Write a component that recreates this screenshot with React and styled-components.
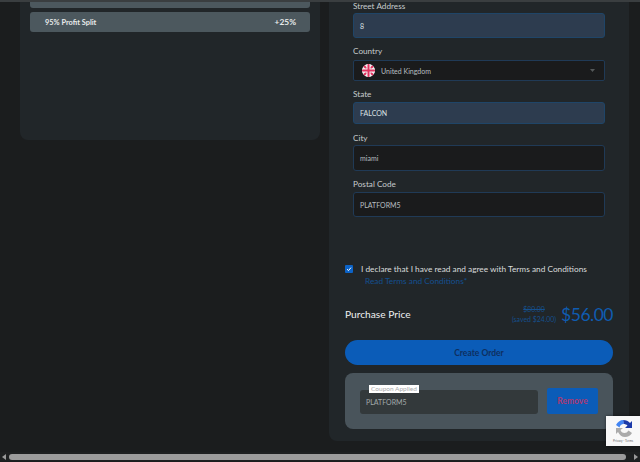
import React from "react";
import styled, { createGlobalStyle } from "styled-components";

const Global = createGlobalStyle`
  html, body {
    margin: 0;
    padding: 0;
    height: 462px;
    overflow: hidden;
    background: #1b1d1e;
  }
  * {
    box-sizing: border-box;
  }
`;

const Page = styled.div`
  width: 640px;
  height: 462px;
  display: flex;
  flex-direction: column;
  font-family: "Lato", "Open Sans", sans-serif;
  background: #1b1d1e;
  position: relative;
`;

const TopEdge = styled.div`
  height: 2px;
  flex: none;
  background: #3a3e40;
`;

const Main = styled.div`
  flex: 1;
  min-height: 0;
  display: flex;
  align-items: flex-start;
  padding-left: 20px;
  gap: 9px;
`;

const PlanCard = styled.section`
  width: 300px;
  height: 138px;
  padding: 0 10px;
  background: #212629;
  border-radius: 0 0 8px 8px;
  display: flex;
  flex-direction: column;
  gap: 4px;
`;

const PlanRow = styled.div`
  height: ${(p) => p.$height}px;
  padding: 0 14px 0 15px;
  background: #4c585e;
  border-radius: ${(p) => (p.$cut ? "0 0 3px 3px" : "3px")};
  display: flex;
  align-items: center;
  justify-content: space-between;
  color: #e9ecec;
  font-size: 7.4px;
  font-weight: 700;
`;

const PlanValue = styled.span`
  font-size: 8.4px;
  font-weight: 700;
`;

const OrderCard = styled.section`
  width: 300px;
  height: 439px;
  padding: 0 16px;
  background: #212629;
  border-radius: 0 0 8px 8px;
`;

const Fields = styled.div`
  padding: 0 8px;
  height: 252px;
`;

const Field = styled.div`
  margin-bottom: ${(p) => p.$gap}px;
`;

const Label = styled.label`
  display: block;
  height: ${(p) => p.$height}px;
  line-height: 9px;
  font-size: 8.2px;
  color: #c6cbcc;
`;

const Input = styled.div`
  width: 252px;
  height: ${(p) => p.$height}px;
  padding: 0 6px;
  display: flex;
  align-items: center;
  font-size: 7px;
  border-radius: 3px;
  color: ${(p) => (p.$filled ? "#dbe0e4" : "#b9bfc0")};
  background: ${(p) => (p.$filled ? "#2d3c4f" : "#1a1b1c")};
  border: 1px solid ${(p) => (p.$filled ? "#1f4568" : "#203a56")};
`;

const SelectBox = styled(Input)`
  justify-content: space-between;
  padding: 0 9px 0 8px;
  border-radius: 2px;
`;

const SelectValue = styled.span`
  display: flex;
  align-items: center;
  gap: 6px;
`;

const Flag = styled.svg`
  width: 13px;
  height: 13px;
  display: block;
`;

const Caret = styled.span`
  width: 5px;
  height: 3px;
  background: #55595a;
  clip-path: polygon(0 0, 100% 0, 50% 100%);
`;

const Agree = styled.div`
  margin-top: 9px;
  display: flex;
  gap: 8px;
`;

const Check = styled.span`
  flex: none;
  width: 8px;
  height: 8px;
  margin-top: 2px;
  background: #0c63c7;
  border-radius: 1px;
  display: flex;
  align-items: center;
  justify-content: center;
`;

const AgreeText = styled.div`
  font-size: 8.3px;
  line-height: 12px;
  color: #d9dcdc;
  white-space: nowrap;
`;

const TermsLink = styled.a`
  display: block;
  padding-left: 4px;
  color: #144f8f;
`;

const PriceRow = styled.div`
  margin-top: 12px;
  height: 30px;
  display: flex;
  align-items: center;
  justify-content: space-between;
`;

const PriceLabel = styled.span`
  font-size: 10.2px;
  color: #eef0f0;
`;

const PriceGroup = styled.div`
  display: flex;
  align-items: center;
  gap: 5px;
`;

const Saved = styled.div`
  font-size: 6.9px;
  line-height: 10px;
  text-align: center;
  color: #154f8c;
`;

const OldPrice = styled.div`
  text-decoration: line-through;
`;

const Price = styled.span`
  font-size: 17.5px;
  letter-spacing: -0.5px;
  color: #0f5cb0;
`;

const OrderButton = styled.button`
  display: block;
  width: 268px;
  height: 25px;
  margin-top: 11px;
  padding: 0;
  border: 0;
  border-radius: 13px;
  background: #0b5cb8;
  color: #0e2f60;
  font-family: inherit;
  font-size: 8.5px;
  font-weight: 700;
`;

const CouponBox = styled.div`
  width: 268px;
  height: 56px;
  margin-top: 8px;
  padding: 15px 15px 0;
  background: #49545b;
  border-radius: 8px;
  display: flex;
  align-items: flex-start;
  gap: 9px;
`;

const CouponField = styled.div`
  position: relative;
  width: 178px;
  height: 24px;
  margin-top: 2px;
  padding: 0 6px;
  display: flex;
  align-items: center;
  background: #33393b;
  border-radius: 3px;
  color: #a3a9aa;
  font-size: 7px;
`;

const CouponLabel = styled.span`
  position: absolute;
  left: 9px;
  top: -5px;
  width: 50px;
  height: 8px;
  line-height: 8px;
  background: #fff;
  color: #a9abad;
  font-size: 6.5px;
  text-align: center;
`;

const RemoveButton = styled.button`
  width: 51px;
  height: 26px;
  padding: 0;
  border: 0;
  border-radius: 2px;
  background: #0b5cb8;
  color: #ab3a72;
  font-family: inherit;
  font-size: 8.5px;
  font-weight: 700;
`;

const Captcha = styled.div`
  position: absolute;
  right: 0;
  top: 416px;
  width: 34px;
  height: 30px;
  padding-top: 2px;
  background: #f8f8f8;
  display: flex;
  flex-direction: column;
  align-items: center;
  box-shadow: 0 0 3px rgba(0, 0, 0, 0.5);
`;

const CaptchaLogo = styled.svg`
  width: 21px;
  height: 21px;
  display: block;
`;

const CaptchaText = styled.span`
  font-size: 3px;
  line-height: 4px;
  color: #666;
  white-space: nowrap;
`;

const ScrollTrack = styled.div`
  flex: none;
  height: 9px;
  margin-bottom: 1px;
  display: flex;
  align-items: center;
  gap: 2px;
  padding: 0 2px;
  background: #1e2021;
`;

const ScrollArrow = styled.span`
  flex: none;
  width: 0;
  height: 0;
  border-top: 3px solid transparent;
  border-bottom: 3px solid transparent;
  border-left: ${(p) => (p.$right ? "4px solid #9a9a9a" : "0")};
  border-right: ${(p) => (p.$right ? "0" : "4px solid #9a9a9a")};
`;

const ScrollThumb = styled.div`
  width: 617px;
  height: 6px;
  margin-left: 1px;
  background: #9c9c9c;
  border-radius: 3px;
`;

const ScrollGap = styled.div`
  flex: 1;
`;

const App = () => {
  return (
    <Page>
      <Global />
      <TopEdge />
      <Main>
        <PlanCard>
          <PlanRow $height={6} $cut />
          <PlanRow $height={20}>
            <span>95% Profit Split</span>
            <PlanValue>+25%</PlanValue>
          </PlanRow>
        </PlanCard>
        <OrderCard>
          <Fields>
            <Field $gap={9}>
              <Label $height={11}>Street Address</Label>
              <Input $filled $height={25}>8</Input>
            </Field>
            <Field $gap={9}>
              <Label $height={13}>Country</Label>
              <SelectBox $height={21}>
                <SelectValue>
                  <Flag viewBox="0 0 13 13">
                    <defs>
                      <clipPath id="flagClip">
                        <circle cx="6.5" cy="6.5" r="6.5" />
                      </clipPath>
                    </defs>
                    <g clipPath="url(#flagClip)">
                      <rect width="13" height="13" fill="#f3eef0" />
                      <path d="M0 0L13 13M13 0L0 13" stroke="#e0325f" strokeWidth="2" />
                      <path d="M6.5 0V13M0 6.5H13" stroke="#f3eef0" strokeWidth="4" />
                      <path d="M6.5 0V13M0 6.5H13" stroke="#e0325f" strokeWidth="2" />
                    </g>
                  </Flag>
                  United Kingdom
                </SelectValue>
                <Caret />
              </SelectBox>
            </Field>
            <Field $gap={10}>
              <Label $height={12}>State</Label>
              <Input $filled $height={22}>FALCON</Input>
            </Field>
            <Field $gap={9}>
              <Label $height={11}>City</Label>
              <Input $height={26}>miami</Input>
            </Field>
            <Field $gap={0}>
              <Label $height={12}>Postal Code</Label>
              <Input $height={25}>PLATFORM5</Input>
            </Field>
          </Fields>
          <Agree>
            <Check>
              <svg width="6" height="6" viewBox="0 0 6 6">
                <path d="M1 3.2L2.5 4.6L5 1.6" fill="none" stroke="#fff" strokeWidth="1" />
              </svg>
            </Check>
            <AgreeText>
              I declare that I have read and agree with Terms and Conditions
              <TermsLink>Read Terms and Conditions*</TermsLink>
            </AgreeText>
          </Agree>
          <PriceRow>
            <PriceLabel>Purchase Price</PriceLabel>
            <PriceGroup>
              <Saved>
                <OldPrice>$80.00</OldPrice>
                (saved $24.00)
              </Saved>
              <Price>$56.00</Price>
            </PriceGroup>
          </PriceRow>
          <OrderButton>Create Order</OrderButton>
          <CouponBox>
            <CouponField>
              <CouponLabel>Coupon Applied</CouponLabel>
              PLATFORM5
            </CouponField>
            <RemoveButton>Remove</RemoveButton>
          </CouponBox>
        </OrderCard>
      </Main>
      <ScrollTrack>
        <ScrollArrow />
        <ScrollThumb />
        <ScrollGap />
        <ScrollArrow $right />
      </ScrollTrack>
      <Captcha>
        <CaptchaLogo viewBox="0 0 21 21">
          <path d="M10 2C13 2 15.5 3 17 5L19 3V10H12L14.5 7.5C13.5 6.5 12 6 10.5 6Z" fill="#1c3aa9" />
          <path d="M10.5 2C7 2 4.5 4 3 7L6.5 9.5C7 7.5 8.5 6 10.5 6Z" fill="#4285f4" />
          <path d="M3 8V16L5 14C6.5 17 9 19 12 19C15 19 17.5 17.5 19 15L15.5 12.5C14.5 14.2 13 15 11.5 15C9.5 15 8 14 7.5 12L10 10H3Z" fill="#ababab" />
        </CaptchaLogo>
        <CaptchaText>Privacy - Terms</CaptchaText>
      </Captcha>
    </Page>
  );
};

export default App;
